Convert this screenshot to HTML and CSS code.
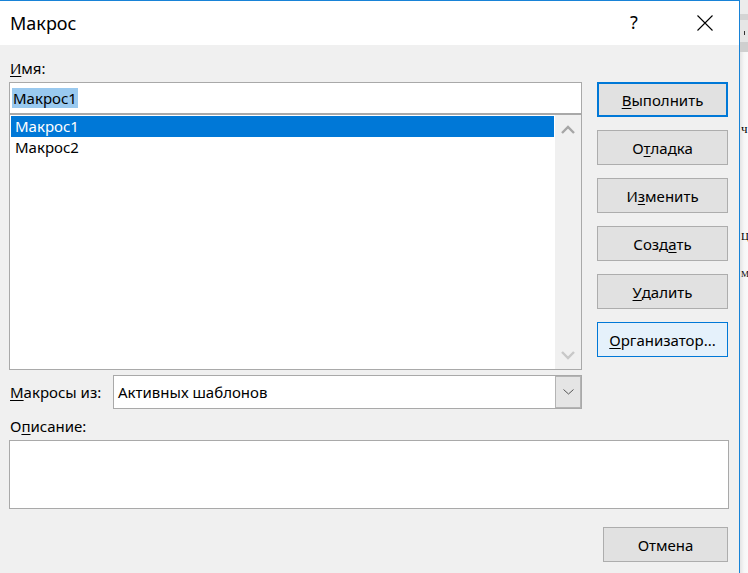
FILE: index.html
```html
<!DOCTYPE html>
<html lang="ru">
<head>
  <meta charset="UTF-8" />
  <title>Макрос</title>
  <link rel="stylesheet" href="styles.css">
</head>
<body>
  <div class="dialog">
    <div class="titlebar">
      <span class="title">Макрос</span>
      <span class="caption-btn help">?</span>
      <span class="caption-btn close">
        <svg width="16" height="16" viewBox="0 0 16 16"><path d="M0.5 0.5 L15.5 15.5 M15.5 0.5 L0.5 15.5" stroke="#000" stroke-width="1.1" fill="none"/></svg>
      </span>
    </div>

    <div class="content">
      <div class="top">
        <div class="left">
          <div class="label"><u>И</u>мя:</div>
          <div class="name-input"><span class="sel-text">Макрос1</span></div>
          <div class="listbox">
            <div class="items">
              <div class="item selected">Макрос1</div>
              <div class="item">Макрос2</div>
            </div>
            <div class="scrollbar">
              <svg width="14" height="9" viewBox="0 0 14 9"><path d="M1 8 L7 2 L13 8" stroke="#a6a6a6" stroke-width="2.4" fill="none"/></svg>
              <svg width="14" height="9" viewBox="0 0 14 9"><path d="M1 1 L7 7 L13 1" stroke="#c8c8c8" stroke-width="2.4" fill="none"/></svg>
            </div>
          </div>
          <div class="from-row">
            <span class="from-label"><u>М</u>акросы из:</span>
            <div class="select">
              <span class="select-value">Активных шаблонов</span>
              <span class="select-btn">
                <svg width="11" height="6" viewBox="0 0 11 6"><path d="M0.5 0.5 L5.5 5 L10.5 0.5" stroke="#555" stroke-width="1" fill="none"/></svg>
              </span>
            </div>
          </div>
        </div>

        <div class="buttons">
          <div class="btn default"><u>В</u>ыполнить</div>
          <div class="btn">О<u>т</u>ладка</div>
          <div class="btn">И<u>з</u>менить</div>
          <div class="btn">Созд<u>а</u>ть</div>
          <div class="btn"><u>У</u>далить</div>
          <div class="btn hot"><u>О</u>рганизатор...</div>
        </div>
      </div>

      <div class="label desc-label">О<u>п</u>исание:</div>
      <div class="desc"></div>

      <div class="footer">
        <div class="btn cancel">Отмена</div>
      </div>
    </div>
  </div>

  <div class="backdrop">
    <div class="ribbon"><span class="tick"></span></div>
    <div class="doc">
      <span class="ch ch1">ч</span>
      <span class="ch ch2">Ц</span>
      <span class="ch ch3">М</span>
    </div>
  </div>
</body>
</html>
```

FILE: styles.css
```css
body {
  margin: 0;
  height: 573px;
  overflow: hidden;
  display: flex;
  font-family: "Noto Sans", "Open Sans", sans-serif;
  font-size: 15px;
  color: #000;
  background: #fff;
}
u {
  text-decoration-thickness: 1px;
  text-underline-offset: 2px;
}
.dialog {
  width: 739px;
  flex-shrink: 0;
  background: #f0f0f0;
  border-top: 1px solid #1883d7;
  border-right: 1px solid #1883d7;
}
.titlebar {
  height: 44px;
  background: #fff;
  display: flex;
  align-items: center;
}
.title {
  font-size: 18px;
  padding-left: 10px;
  margin-right: auto;
  margin-top: -1px;
}
.caption-btn {
  width: 46px;
  display: flex;
  justify-content: center;
}
.help {
  font-size: 18px;
  margin-top: -2px;
}
.close {
  margin-left: 25px;
  margin-right: 11px;
}
.content {
  padding: 0 9px;
}
.top {
  display: flex;
  gap: 15px;
}
.left {
  width: 573px;
  padding-top: 13px;
}
.label {
  line-height: 20px;
  padding-left: 1px;
  margin-bottom: 4px;
}
.name-input {
  height: 30px;
  background: #fff;
  border: 1px solid #a9a9a9;
  display: flex;
  align-items: center;
  padding-left: 2px;
}
.sel-text {
  background: #99c9ef;
  line-height: 20px;
  padding: 0 1px;
}
.listbox {
  height: 254px;
  background: #fff;
  border: 1px solid #a9a9a9;
  display: flex;
}
.items {
  flex: 1;
  padding: 1px;
}
.item {
  height: 21px;
  line-height: 21px;
  padding-left: 4px;
}
.item.selected {
  background: #0078d7;
  color: #fff;
}
.scrollbar {
  width: 26px;
  background: #f0f0f0;
  display: flex;
  flex-direction: column;
  justify-content: space-between;
  align-items: center;
  padding: 10px 0 9px;
}
.from-row {
  display: flex;
  align-items: center;
  margin-top: 5px;
}
.from-label {
  width: 103px;
  padding-left: 1px;
}
.select {
  flex: 1;
  height: 32px;
  background: #fff;
  border: 1px solid #a9a9a9;
  display: flex;
  align-items: center;
}
.select-value {
  flex: 1;
  padding-left: 4px;
}
.select-btn {
  width: 24px;
  height: 30px;
  background: #e5e5e5;
  border: 1px solid #b4b4b4;
  display: flex;
  align-items: center;
  justify-content: center;
}
.buttons {
  width: 131px;
  padding-top: 37px;
  display: flex;
  flex-direction: column;
  gap: 13px;
}
.btn {
  height: 33px;
  background: #e1e1e1;
  border: 1px solid #adadad;
  display: flex;
  align-items: center;
  justify-content: center;
}
.btn.default {
  height: 31px;
  border: 2px solid #0078d7;
}
.btn.hot {
  background: #e5f1fb;
  border-color: #0078d7;
}
.desc-label {
  margin-top: 7px;
}
.desc {
  height: 67px;
  margin-right: 1px;
  background: #fff;
  border: 1px solid #a9a9a9;
}
.footer {
  display: flex;
  justify-content: flex-end;
  padding-right: 2px;
  margin-top: 18px;
}
.btn.cancel {
  width: 123px;
}
.backdrop {
  flex: 1;
  overflow: hidden;
  background: linear-gradient(to right, #e4e4e4, #f6f6f6 4px, #fafafa);
}
.ribbon {
  height: 52px;
  background: linear-gradient(to bottom, #ececec 0, #ececec 14px, #d4d4d4 14px, #d4d4d4 20px, #e6e6e6 20px, #e6e6e6 42px, #cfcfcf 42px, #cfcfcf 52px);
  position: relative;
}
.tick {
  position: absolute;
  left: 4px;
  top: 31px;
  width: 1px;
  height: 4px;
  background: #333;
}
.doc {
  font-family: "Liberation Serif", serif;
  display: flex;
  flex-direction: column;
  align-items: flex-start;
  padding-left: 1px;
}
.ch {
  line-height: 1;
}
.ch1 {
  font-size: 13px;
  margin-top: 70px;
}
.ch2 {
  font-size: 11px;
  margin-top: 96px;
}
.ch3 {
  font-size: 9px;
  margin-top: 28px;
}
```
